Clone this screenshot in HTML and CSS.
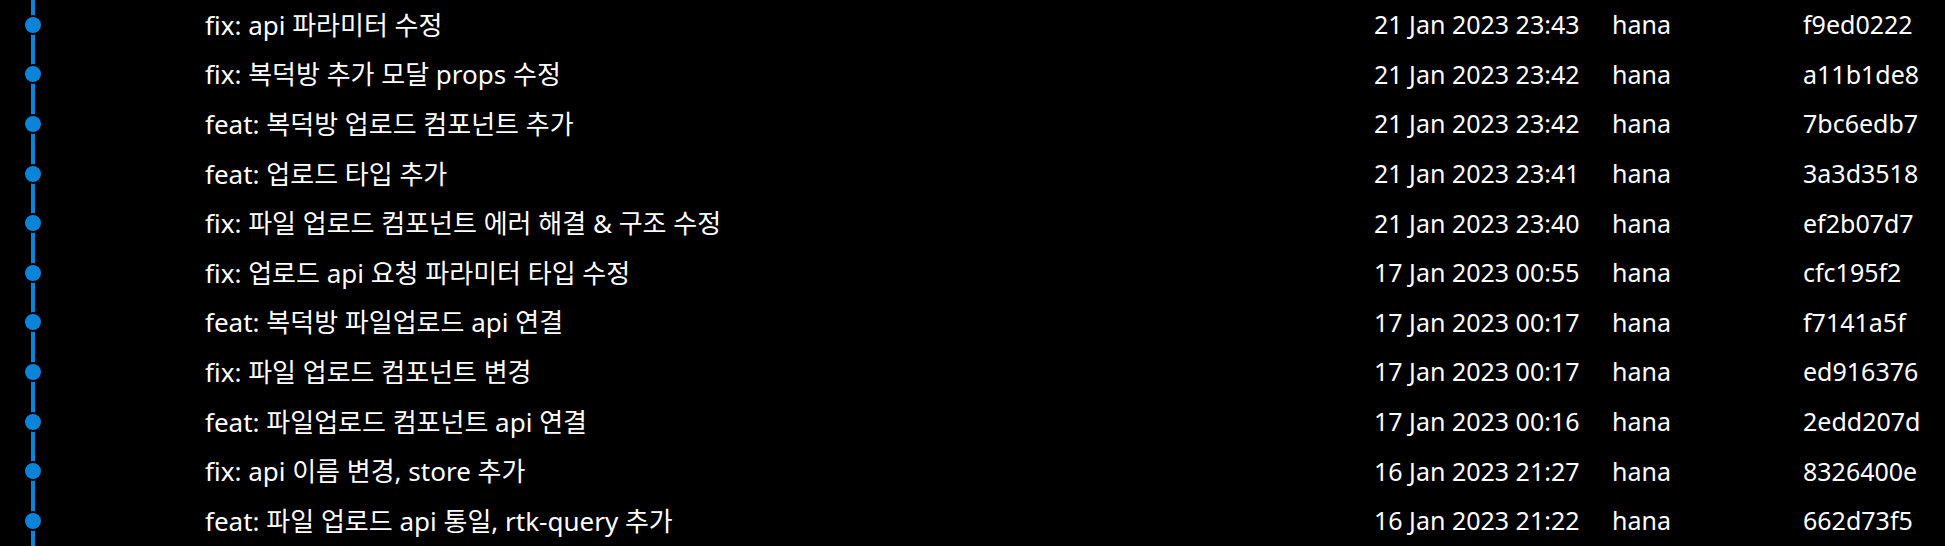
FILE: index.html
```html
<!DOCTYPE html>
<html lang="ko">
<head>
<meta charset="utf-8">
<link rel="stylesheet" href="styles.css">
</head>
<body>
<div class="log">
  <div class="row"><div class="graph"><span class="dot"></span></div><div class="msg">fix: api 파라미터 수정</div><div class="date">21 Jan 2023 23:43</div><div class="author">hana</div><div class="hash">f9ed0222</div></div>
  <div class="row"><div class="graph"><span class="dot"></span></div><div class="msg">fix: 복덕방 추가 모달 props 수정</div><div class="date">21 Jan 2023 23:42</div><div class="author">hana</div><div class="hash">a11b1de8</div></div>
  <div class="row"><div class="graph"><span class="dot"></span></div><div class="msg">feat: 복덕방 업로드 컴포넌트 추가</div><div class="date">21 Jan 2023 23:42</div><div class="author">hana</div><div class="hash">7bc6edb7</div></div>
  <div class="row"><div class="graph"><span class="dot"></span></div><div class="msg">feat: 업로드 타입 추가</div><div class="date">21 Jan 2023 23:41</div><div class="author">hana</div><div class="hash">3a3d3518</div></div>
  <div class="row"><div class="graph"><span class="dot"></span></div><div class="msg">fix: 파일 업로드 컴포넌트 에러 해결 &amp; 구조 수정</div><div class="date">21 Jan 2023 23:40</div><div class="author">hana</div><div class="hash">ef2b07d7</div></div>
  <div class="row"><div class="graph"><span class="dot"></span></div><div class="msg">fix: 업로드 api 요청 파라미터 타입 수정</div><div class="date">17 Jan 2023 00:55</div><div class="author">hana</div><div class="hash">cfc195f2</div></div>
  <div class="row"><div class="graph"><span class="dot"></span></div><div class="msg">feat: 복덕방 파일업로드 api 연결</div><div class="date">17 Jan 2023 00:17</div><div class="author">hana</div><div class="hash">f7141a5f</div></div>
  <div class="row"><div class="graph"><span class="dot"></span></div><div class="msg">fix: 파일 업로드 컴포넌트 변경</div><div class="date">17 Jan 2023 00:17</div><div class="author">hana</div><div class="hash">ed916376</div></div>
  <div class="row"><div class="graph"><span class="dot"></span></div><div class="msg">feat: 파일업로드 컴포넌트 api 연결</div><div class="date">17 Jan 2023 00:16</div><div class="author">hana</div><div class="hash">2edd207d</div></div>
  <div class="row"><div class="graph"><span class="dot"></span></div><div class="msg">fix: api 이름 변경, store 추가</div><div class="date">16 Jan 2023 21:27</div><div class="author">hana</div><div class="hash">8326400e</div></div>
  <div class="row"><div class="graph"><span class="dot"></span></div><div class="msg">feat: 파일 업로드 api 통일, rtk-query 추가</div><div class="date">16 Jan 2023 21:22</div><div class="author">hana</div><div class="hash">662d73f5</div></div>
</div>
</body>
</html>
```
FILE: styles.css
```css
html, body {
  margin: 0;
  padding: 0;
  background: #000;
}
body {
  width: 1945px;
  height: 546px;
  overflow: hidden;
  color: #ffffff;
  font-family: "Noto Sans", "Noto Sans CJK KR", sans-serif;
  font-size: 25px;
}
.log {
  display: flex;
  flex-direction: column;
}
.row {
  display: grid;
  grid-template-columns: 205px 1169px 238px 191px 1fr;
  align-items: center;
  height: 49.6px;
  white-space: nowrap;
}
.graph {
  position: relative;
  height: 100%;
}
.graph::before {
  content: "";
  position: absolute;
  left: 31px;
  top: 0;
  bottom: 0;
  width: 4px;
  background: #0a84d9;
}
.dot {
  position: absolute;
  left: 23px;
  top: 50%;
  width: 16px;
  height: 16px;
  margin-top: -10px;
  border: 2px solid #000;
  border-radius: 50%;
  background: #0a84d9;
}
.msg, .date, .author, .hash {
  line-height: 1;
}
.msg {
  font-size: 26px;
}
```
